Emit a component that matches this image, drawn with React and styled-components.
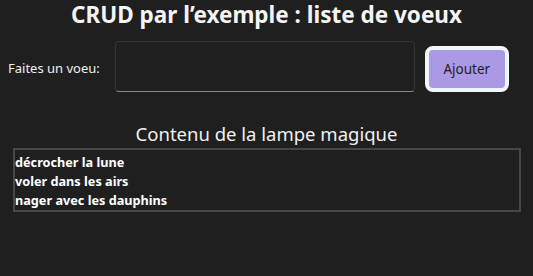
import React, { useState } from 'react';
import styled, { createGlobalStyle } from 'styled-components';

const GlobalStyle = createGlobalStyle`
  html, body {
    margin: 0;
    padding: 0;
    background: #1f1f1f;
    color: #ffffff;
    font-family: "Noto Sans", "Open Sans", sans-serif;
  }
`;

const Page = styled.main`
  width: 533px;
  height: 276px;
  box-sizing: border-box;
`;

const Title = styled.h1`
  margin: 0;
  text-align: center;
  font-size: 22.5px;
  line-height: 30px;
  font-weight: 700;
  color: #f4f4f4;
`;

const FormRow = styled.form`
  display: flex;
  align-items: flex-end;
  margin-top: 11px;
  padding-left: 8px;
`;

const Label = styled.label`
  align-self: center;
  font-size: 13px;
  color: #f0f0f0;
  margin-right: 15px;
  margin-top: 2px;
`;

const WishInput = styled.input`
  box-sizing: border-box;
  width: 300px;
  height: 51px;
  background: #1f1f1f;
  border: 1px solid #363636;
  border-bottom: 1px solid #8a8a8a;
  border-radius: 4px;
  color: #fff;
  font: inherit;
  padding: 0 10px;
  outline: none;
`;

const AddButton = styled.button`
  box-sizing: border-box;
  width: 84px;
  height: 46px;
  margin-left: 10px;
  background: #ab99e6;
  border: 4px solid #eef6ff;
  border-radius: 8px;
  color: #1f1f1f;
  font-family: inherit;
  font-size: 13.5px;
  cursor: pointer;
`;

const SubTitle = styled.h2`
  margin: 29.5px 0 2.5px;
  text-align: center;
  font-size: 18.5px;
  line-height: 24px;
  font-weight: 400;
  color: #f0f0f0;
`;

const WishList = styled.ul`
  list-style: none;
  margin: 0 12px 0 13px;
  padding: 2.5px 0 0 0;
  border: 2px solid #474747;
`;

const Wish = styled.li`
  font-size: 12.7px;
  font-weight: 700;
  line-height: 19px;
  color: #ffffff;
`;

const initialWishes = ['décrocher la lune', 'voler dans les airs', 'nager avec les dauphins'];

export default function App() {
  const [wishes, setWishes] = useState(initialWishes);
  const [text, setText] = useState('');

  const add = (e) => {
    e.preventDefault();
    if (!text.trim()) return;
    setWishes([...wishes, text.trim()]);
    setText('');
  };

  return (
    <>
      <GlobalStyle />
      <Page>
        <Title>CRUD par l’exemple : liste de voeux</Title>
        <FormRow onSubmit={add}>
          <Label htmlFor="voeu">Faites un voeu:</Label>
          <WishInput id="voeu" value={text} onChange={(e) => setText(e.target.value)} />
          <AddButton type="submit">Ajouter</AddButton>
        </FormRow>
        <SubTitle>Contenu de la lampe magique</SubTitle>
        <WishList>
          {wishes.map((w) => (
            <Wish key={w}>{w}</Wish>
          ))}
        </WishList>
      </Page>
    </>
  );
}
